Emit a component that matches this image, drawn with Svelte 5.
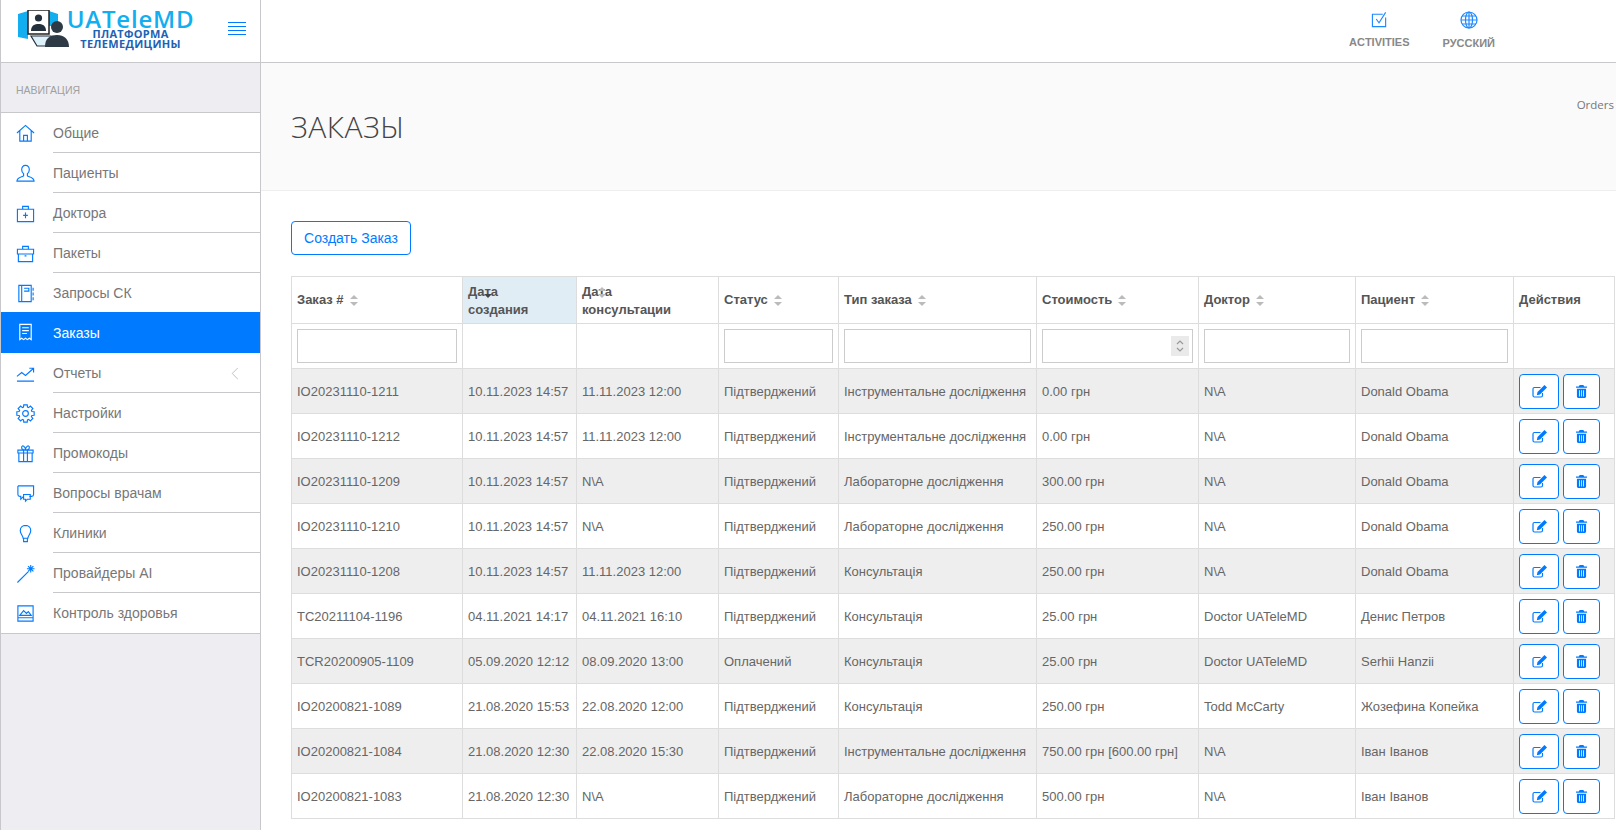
<script lang="ts">
  const gear = (() => {
    let d = "";
    const n = 8;
    for (let i = 0; i < n; i++) {
      const a = (i / n) * Math.PI * 2;
      const pts = [
        [7, a - 0.3],
        [9.3, a - 0.2],
        [9.3, a + 0.2],
        [7, a + 0.3],
      ];
      for (const [r, t] of pts) {
        d += `${d ? "L" : "M"}${(10 + r * Math.cos(t)).toFixed(2)} ${(10 + r * Math.sin(t)).toFixed(2)}`;
      }
    }
    return d + "Z";
  })();

  const nav = [
    { label: "Общие", icon: "M1 9.5 10 1.5l9 8M4 7v11h12V7M8 18v-6h4v6" },
    { label: "Пациенты", icon: "M10 1.5c-2.6 0-4 2-4 4.5 0 1.800.8 3.300 2 4.300v2.200c-1.200 1.200-7 1.500-7 5.500h18c0-4-5.800-4.300-7-5.500v-2.200c1.200-1 2-2.500 2-4.300 0-2.500-1.400-4.500-4-4.500z" },
    { label: "Доктора", icon: "M1.500 5.500h17v13h-17zM7 5.500V2.500h6v3M10 9v6M7.500 12h5" },
    { label: "Пакеты", icon: "M1.500 5.500h17v5h-17zM2.500 10.500v8h15v-8M7 5.500V2.500h6v3M9 12.500h2" },
    { label: "Запросы СК", icon: "M3 1.500h13v17H3zM6 1.500v17M8.500 4.500h5v3h-5M18 4v3M18 9v3M18 14v3" },
    { label: "Заказы", icon: "M4 1.500h12v16l-2-1.500-2 1.500-2-1.500-2 1.500-2-1.500-2 1.500zM6.500 5h7M6.500 8h7M6.500 11h5", active: true },
    { label: "Отчеты", icon: "M1 13l5-4 4 3 8-7M14 4.500h4.500V9M1 18h18", arrow: true },
    { label: "Настройки", icon: gear + "M13 10a3 3 0 1 1-6 0 3 3 0 0 1 6 0z" },
    { label: "Промокоды", icon: "M2 6.500h16v3H2zM3 9.500v9h14v-9M8 6.500v12M12 6.500v12M10 6.500C7 6.500 5.500 5 6 3s4-1 4 3.500c0-4.500 3.500-5.500 4-3.500s-1 3.500-4 3.500z" },
    { label: "Вопросы врачам", icon: "M2 2h16.500v9c0 1-.5 2-2 2H14M2 2v9c0 1 .5 2 2 2h1v3l3-3M8 11h7v5h-3l-2 2v-2H8z" },
    { label: "Клиники", icon: "M10 1.500c-3.300 0-5.500 2.500-5.500 5.500 0 3 2.500 5 3 8h5c.5-3 3-5 3-8 0-3-2.200-5.500-5.500-5.500zM8 15v3.500h4V15" },
    { label: "Провайдеры AI", icon: "M1.500 19.500 13 8M15.500 1v8M11.500 5h8M12.700 2.200l5.600 5.600M18.300 2.200l-5.600 5.600" },
    { label: "Контроль здоровья", icon: "M2 2h16v16H2zM2 14.500h16M4 12l4-5 3 3 2-2 3 4z" },
  ];

  const rows = [
    ["IO20231110-1211", "10.11.2023 14:57", "11.11.2023 12:00", "Підтверджений", "Інструментальне дослідження", "0.00 грн", "N\\A", "Donald Obama"],
    ["IO20231110-1212", "10.11.2023 14:57", "11.11.2023 12:00", "Підтверджений", "Інструментальне дослідження", "0.00 грн", "N\\A", "Donald Obama"],
    ["IO20231110-1209", "10.11.2023 14:57", "N\\A", "Підтверджений", "Лабораторне дослідження", "300.00 грн", "N\\A", "Donald Obama"],
    ["IO20231110-1210", "10.11.2023 14:57", "N\\A", "Підтверджений", "Лабораторне дослідження", "250.00 грн", "N\\A", "Donald Obama"],
    ["IO20231110-1208", "10.11.2023 14:57", "11.11.2023 12:00", "Підтверджений", "Консультація", "250.00 грн", "N\\A", "Donald Obama"],
    ["TC20211104-1196", "04.11.2021 14:17", "04.11.2021 16:10", "Підтверджений", "Консультація", "25.00 грн", "Doctor UATeleMD", "Денис Петров"],
    ["TCR20200905-1109", "05.09.2020 12:12", "08.09.2020 13:00", "Оплачений", "Консультація", "25.00 грн", "Doctor UATeleMD", "Serhii Hanzii"],
    ["IO20200821-1089", "21.08.2020 15:53", "22.08.2020 12:00", "Підтверджений", "Консультація", "250.00 грн", "Todd McCarty", "Жозефина Копейка"],
    ["IO20200821-1084", "21.08.2020 12:30", "22.08.2020 15:30", "Підтверджений", "Інструментальне дослідження", "750.00 грн [600.00 грн]", "N\\A", "Іван Іванов"],
    ["IO20200821-1083", "21.08.2020 12:30", "N\\A", "Підтверджений", "Лабораторне дослідження", "500.00 грн", "N\\A", "Іван Іванов"],
  ];

  const widths = [171, 114, 142, 120, 198, 162, 157, 158, 101];
  const simpleHeads = ["Статус", "Тип заказа", "Стоимость", "Доктор", "Пациент"];
</script>

<div class="page">
  <aside class="side">
    <div class="brand">
      <svg class="brand-pic" viewBox="0 0 52 38" width="52" height="38">
        <path d="M0 4 10 1v28L0 27z" fill="#12aef0" />
        <path d="M31 1l9 3v12h-9z" fill="#12aef0" />
        <rect x="10" y="0" width="21" height="24" fill="#fff" stroke="#222" stroke-width="1.500" />
        <circle cx="20.500" cy="8" r="3.600" fill="#24303c" />
        <path d="M13 21c0-6 4-7 7.500-7s7.500 1 7.500 7z" fill="#24303c" />
        <path d="M13 26h20l5 10H19z" fill="#dff1fb" stroke="#24303c" stroke-width="1.200" />
        <circle cx="39" cy="17" r="6" fill="#2e3a46" />
        <path d="M27 37c0-9 5-12 12-12s12 4 12 12z" fill="#2e3a46" />
      </svg>
      <div class="brand-text">
        <div class="brand-name">UATeleMD</div>
        <div class="brand-sub">ПЛАТФОРМА<br />ТЕЛЕМЕДИЦИНЫ</div>
      </div>
      <div class="burger"><i></i><i></i><i></i><i></i></div>
    </div>
    <div class="nav-title">НАВИГАЦИЯ</div>
    <ul class="nav">
      {#each nav as item}
        <li class="nav-item" class:active={item.active}>
          <svg class="nav-icon" viewBox="0 0 20 20" width="19" height="19"><path d={item.icon} /></svg>
          <span class="nav-label">{item.label}</span>
          {#if item.arrow}
            <svg class="nav-arrow" viewBox="0 0 8 14" width="8" height="13"><path d="M7 1 1 7l6 6" /></svg>
          {/if}
        </li>
      {/each}
    </ul>
  </aside>

  <main class="main">
    <header class="top">
      <div class="top-item">
        <svg viewBox="0 0 18 18" width="17" height="17"><path d="M15.500 7v9.500h-14v-13h11M5.500 8.500l3 4 7-11" /></svg>
        <span>ACTIVITIES</span>
      </div>
      <div class="top-item">
        <svg viewBox="0 0 18 18" width="18" height="18"><circle cx="9" cy="9" r="8" /><ellipse cx="9" cy="9" rx="3.500" ry="8" /><path d="M1 9h16M2 5h14M2 13h14M9 1v16" /></svg>
        <span>РУССКИЙ</span>
      </div>
    </header>

    <section class="head">
      <h1>ЗАКАЗЫ</h1>
      <div class="crumb">Orders</div>
    </section>

    <section class="content">
      <button class="create">Создать Заказ</button>
      <table class="orders">
        <colgroup>
          {#each widths as w}<col style="width:{w}px" />{/each}
        </colgroup>
        <thead>
          <tr class="head-row">
            <th>Заказ #<span class="sort"></span></th>
            <th class="sorted two">Дата<br />создания<span class="sort over dark"></span></th>
            <th class="two">Дата<br />консультации<span class="sort over"></span></th>
            {#each simpleHeads as h}
              <th>{h}<span class="sort"></span></th>
            {/each}
            <th>Действия</th>
          </tr>
          <tr class="filter-row">
            <th><input class="filter" /></th>
            <th></th>
            <th></th>
            <th><input class="filter" /></th>
            <th><input class="filter" /></th>
            <th class="num">
              <input class="filter" />
              <span class="spin">
                <svg viewBox="0 0 10 14" width="10" height="14"><path d="M2 5l3-3 3 3M2 9l3 3 3-3" /></svg>
              </span>
            </th>
            <th><input class="filter" /></th>
            <th><input class="filter" /></th>
            <th></th>
          </tr>
        </thead>
        <tbody>
          {#each rows as row}
            <tr>
              {#each row as cell}<td>{cell}</td>{/each}
              <td>
                <div class="actions">
                  <button class="act edit" aria-label="edit">
                    <svg viewBox="0 0 15 13" width="15" height="13">
                      <path class="line" d="M8.500 2.500H2.500C1.500 2.500 1 3 1 4v6.500c0 1 .5 1.500 1.500 1.500H9c1 0 1.500-.5 1.500-1.500V8" />
                      <path class="fill" d="M12.500 0 15 2.500 8 9.500 4.800 10.300 5.500 7z" />
                    </svg>
                  </button>
                  <button class="act trash" aria-label="delete">
                    <svg viewBox="0 0 12 14" width="11" height="13">
                      <path class="fill" fill-rule="evenodd" d="M4 0h4l1 1.500h3v1.500H0V1.500h3zM1 4h10v8.500c0 .8-.6 1.500-1.400 1.500H2.400C1.600 14 1 13.300 1 12.500zM3.300 5.500v7h.9v-7zM5.600 5.500v7h.8v-7zM7.800 5.500v7h.9v-7z" />
                    </svg>
                  </button>
                </div>
              </td>
            </tr>
          {/each}
        </tbody>
      </table>
    </section>
  </main>
</div>

<style>
  :global(body) {
    margin: 0;
    background: #fff;
    font-family: "Liberation Sans", Arial, sans-serif;
    color: #666;
  }

  .page {
    display: flex;
    height: 830px;
    overflow: hidden;
  }

  .side {
    flex: 0 0 261px;
    box-sizing: border-box;
    background: #eeeef2;
    border-left: 1px solid #c8c8cc;
    border-right: 1px solid #c8c8cc;
  }

  .brand {
    display: flex;
    height: 63px;
    box-sizing: border-box;
    background: #fff;
    border-bottom: 1px solid #c8c8cc;
    padding: 10px 0 0 17px;
    position: relative;
  }

  .brand-pic {
    flex: none;
  }

  .brand-text {
    margin-left: -4px;
    width: 129px;
    text-align: center;
  }

  .brand-name {
    font-family: "Open Sans", sans-serif;
    font-size: 24px;
    font-weight: 600;
    line-height: 18px;
    letter-spacing: 0.8px;
    color: #12aef0;
    white-space: nowrap;
  }

  .brand-sub {
    font-family: "Open Sans", sans-serif;
    font-size: 11px;
    font-weight: 700;
    line-height: 10px;
    letter-spacing: 0.3px;
    margin-top: 1px;
    color: #1d62b4;
    white-space: nowrap;
  }

  .burger {
    position: absolute;
    left: 227px;
    top: 22px;
    width: 18px;
    display: flex;
    flex-direction: column;
    gap: 3px;
  }

  .burger i {
    display: block;
    height: 1px;
    background: #007bff;
  }

  .nav-title {
    height: 50px;
    box-sizing: border-box;
    border-bottom: 1px solid #c8c8cc;
    padding-top: 21px;
    padding-left: 15px;
    font-size: 10.500px;
    color: #a0a0a0;
  }

  .nav {
    list-style: none;
    margin: 0;
    padding: 0;
    background: #fff;
    border-bottom: 1px solid #c8c8cc;
  }

  .nav-item {
    display: flex;
    align-items: center;
    height: 40px;
    position: relative;
    font-size: 14px;
    color: #777;
  }

  .nav-item:not(:last-child)::after {
    content: "";
    position: absolute;
    left: 52px;
    right: 0;
    bottom: 0;
    height: 1px;
    background: #c8c8cc;
  }

  .nav-item.active {
    background: #007bff;
    color: #fff;
    margin-top: -1px;
    height: 41px;
  }

  .nav-item.active::after {
    display: none;
  }

  .nav-icon {
    flex: none;
    margin-left: 15px;
    fill: none;
    stroke: #007bff;
    stroke-width: 1.200;
  }

  .active .nav-icon {
    stroke: #fff;
  }

  .nav-label {
    margin-left: 18px;
  }

  .nav-arrow {
    margin-left: auto;
    margin-right: 21px;
    fill: none;
    stroke: #bbb;
    stroke-width: 1;
  }

  .main {
    flex: 1;
    min-width: 0;
  }

  .top {
    display: flex;
    height: 63px;
    box-sizing: border-box;
    border-bottom: 1px solid #c8c8cc;
    padding-left: 1088px;
    gap: 33px;
  }

  .top-item {
    display: flex;
    flex-direction: column;
    align-items: center;
    padding-top: 11px;
    font-size: 11px;
    font-weight: bold;
    color: #888;
  }

  .top-item span {
    margin-top: 8px;
  }

  .top-item svg {
    fill: none;
    stroke: #1e88ff;
    stroke-width: 1.200;
  }

  .head {
    height: 128px;
    box-sizing: border-box;
    background: #fafafa;
    border-bottom: 1px solid #eee;
    padding: 0 2px 0 30px;
    display: flex;
    justify-content: space-between;
  }

  h1 {
    margin: 46px 0 0;
    font-family: "Open Sans", sans-serif;
    font-size: 30px;
    line-height: 36px;
    font-weight: 300;
    letter-spacing: 0.5px;
    color: #444;
  }

  .crumb {
    margin-top: 34px;
    font-family: "Open Sans", sans-serif;
    font-size: 11.500px;
    color: #777;
  }

  .content {
    padding: 30px 2px 0 30px;
  }

  .create {
    display: block;
    width: 120px;
    height: 34px;
    padding: 0;
    background: #fff;
    border: 1px solid #007bff;
    border-radius: 4px;
    color: #007bff;
    font: 14px "Liberation Sans", Arial, sans-serif;
  }

  .orders {
    margin-top: 21px;
    width: 1323px;
    table-layout: fixed;
    border-collapse: collapse;
    font-size: 13px;
  }

  th,
  td {
    border: 1px solid #ddd;
    padding: 0 5px;
    text-align: left;
    white-space: nowrap;
    overflow: hidden;
    color: #666;
    font-weight: normal;
  }

  tbody tr {
    height: 45px;
  }

  tbody tr:nth-child(odd) {
    background: #eee;
  }

  .head-row {
    height: 47px;
  }

  .head-row th {
    position: relative;
    font-weight: bold;
    line-height: 18px;
    color: #555;
  }

  .head-row th.two {
    padding-top: 2px;
  }

  .sorted {
    background: #e1edf5;
  }

  .sort {
    display: inline-block;
    position: relative;
    width: 8px;
    height: 11px;
    margin-left: 6px;
    vertical-align: -2px;
  }

  .sort::before,
  .sort::after {
    content: "";
    position: absolute;
    left: 0;
    border-left: 4px solid transparent;
    border-right: 4px solid transparent;
  }

  .sort::before {
    top: 0;
    border-bottom: 4px solid #bbb;
  }

  .sort::after {
    bottom: 0;
    border-top: 4px solid #bbb;
  }

  .sort.over {
    position: absolute;
    left: 21px;
    top: 10px;
    margin: 0;
  }

  .sort.dark::before {
    display: none;
  }

  .sort.dark::after {
    border-top-color: #444;
  }

  .filter-row {
    height: 45px;
  }

  .filter-row th {
    padding: 0 5px;
    position: relative;
  }

  .filter {
    display: block;
    width: 100%;
    height: 34px;
    box-sizing: border-box;
    border: 1px solid #ccc;
    background: #fff;
    padding: 0;
  }

  .spin {
    position: absolute;
    right: 9px;
    top: 12px;
    width: 18px;
    height: 20px;
    background: #eaeaea;
    display: flex;
    align-items: center;
    justify-content: center;
  }

  .spin svg {
    fill: none;
    stroke: #999;
    stroke-width: 1.200;
  }

  .actions {
    display: flex;
    gap: 4px;
  }

  .act {
    height: 35px;
    padding: 0;
    background: #fff;
    border: 1px solid #007bff;
    border-radius: 4px;
    display: flex;
    align-items: center;
    justify-content: center;
  }

  .edit {
    width: 40px;
  }

  .trash {
    width: 37px;
  }

  .fill {
    fill: #007bff;
  }

  .line {
    fill: none;
    stroke: #007bff;
    stroke-width: 1.200;
  }
</style>
